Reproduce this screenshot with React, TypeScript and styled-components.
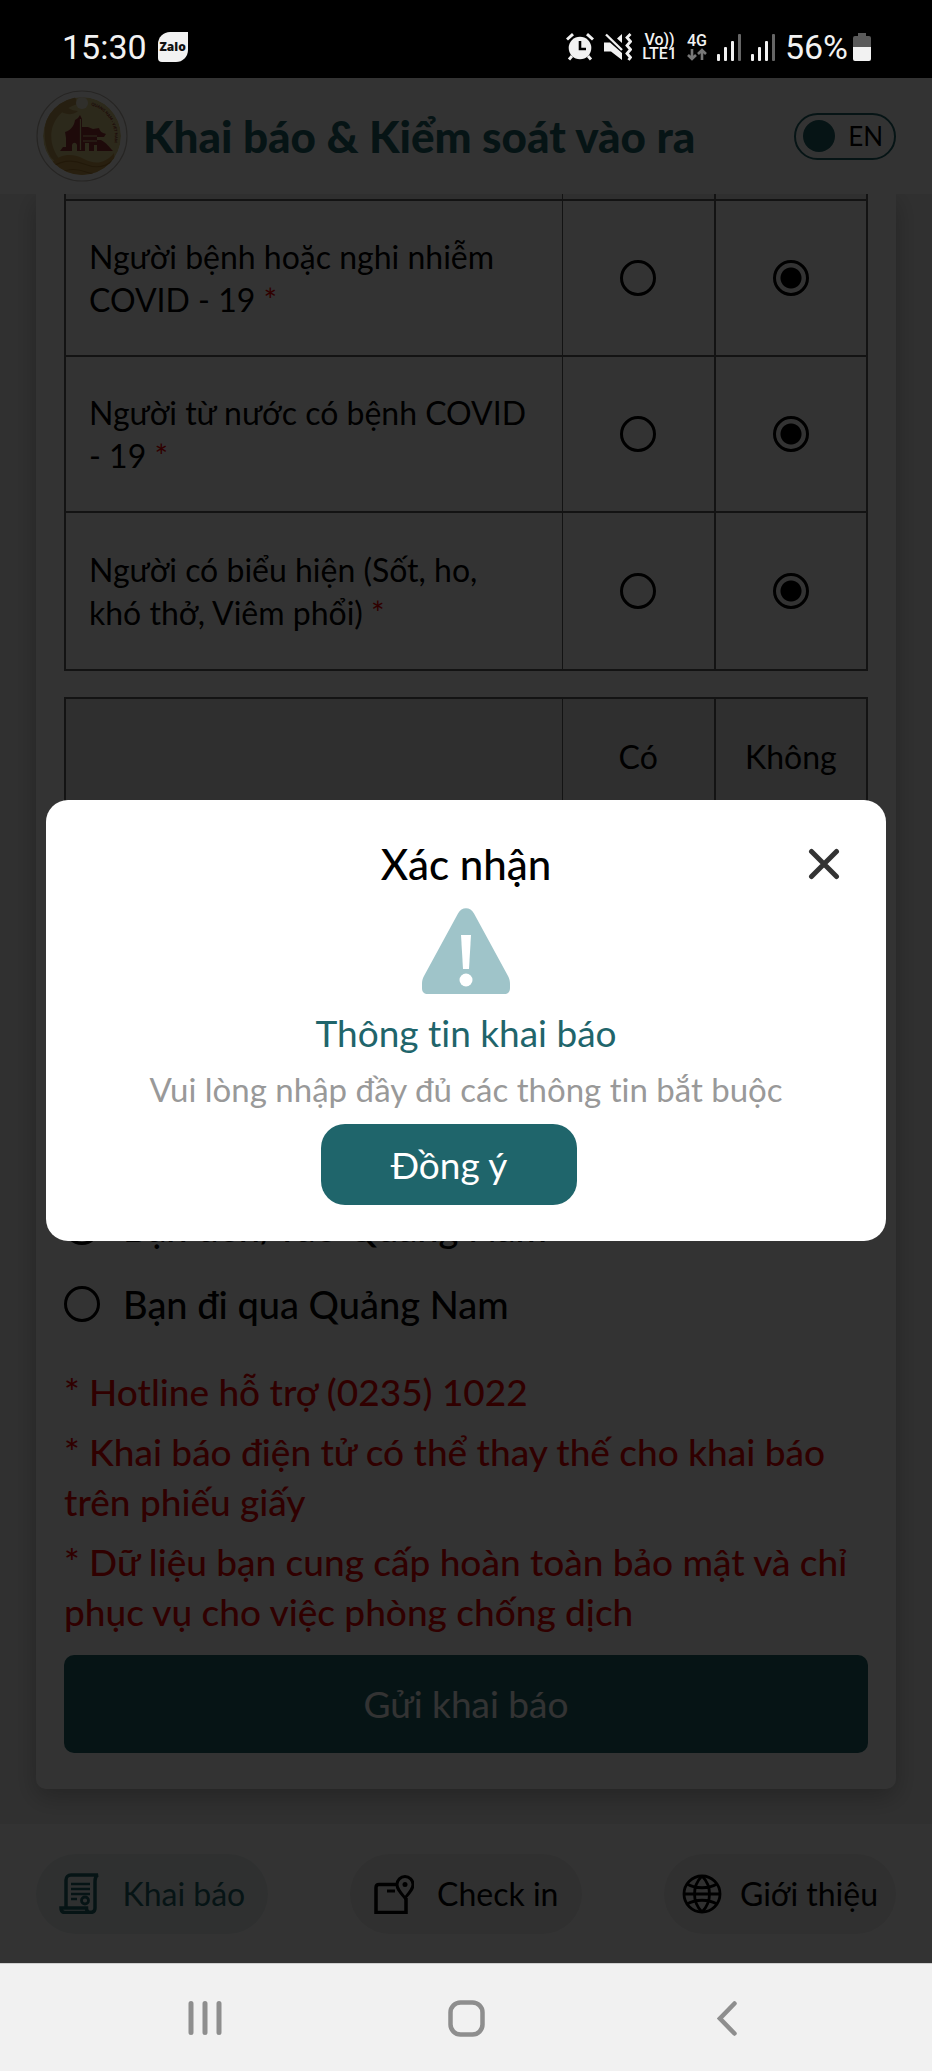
import React from 'react';
import styled, { createGlobalStyle, css } from 'styled-components';

const TEAL = '#1f656b';
const LINE = '#606060';

const GlobalStyle = createGlobalStyle`
  * { box-sizing: border-box; }
  body {
    margin: 0;
    background: #ffffff;
    color: #000000;
    font-family: Lato, "Open Sans", sans-serif;
    font-variant-ligatures: none;
  }
  button, input { font: inherit; color: inherit; margin: 0; }
`;

const Phone = styled.div`
  min-height: 100vh;
  display: flex;
  flex-direction: column;
`;

/* ---------- status bar ---------- */

const StatusBar = styled.div`
  height: 78px;
  padding: 16px 61px 0 62px;
  display: flex;
  align-items: center;
  justify-content: space-between;
  background: #000000;
  color: #f2f2f2;
  font-family: Roboto, sans-serif;
  font-size: 34px;
  line-height: 40px;
`;

const StatusGroup = styled.div<{ $gap: number }>`
  display: flex;
  align-items: center;
  gap: ${(p) => p.$gap}px;
`;

const ZaloBadge = styled.span`
  width: 30px;
  height: 30px;
  display: flex;
  align-items: center;
  justify-content: center;
  background: #f2f2f2;
  border-radius: 12px 0 12px 4px;
  color: #111111;
  font-family: "Open Sans", sans-serif;
  font-size: 12px;
  font-weight: 800;
  line-height: 12px;
`;

const Stack = styled.span`
  display: flex;
  flex-direction: column;
  align-items: center;
  font-size: 16px;
  font-weight: 500;
  line-height: 14px;
`;

/* ---------- web page ---------- */

const Screen = styled.div`
  position: relative;
  flex: 1;
  display: flex;
  flex-direction: column;
  background: #f0f0f0;
`;

const Header = styled.header`
  height: 116px;
  padding: 0 36px;
  display: flex;
  align-items: center;
  background: #ffffff;
`;

const AppTitle = styled.h1`
  flex: 1;
  margin: 0 0 0 15px;
  color: ${TEAL};
  font-size: 44px;
  font-weight: 900;
  line-height: 54px;
`;

const LanguageSwitch = styled.button`
  width: 102px;
  height: 47px;
  padding: 0 11px 0 7px;
  display: flex;
  align-items: center;
  justify-content: space-between;
  border: 2px solid ${TEAL};
  border-radius: 24px;
  background: transparent;
  font-size: 26px;
  line-height: 32px;
`;

const Knob = styled.span`
  width: 32px;
  height: 32px;
  border-radius: 50%;
  background: ${TEAL};
`;

const Main = styled.main`
  flex: 1;
  padding: 0 36px 35px;
  overflow: hidden;
`;

const Card = styled.form`
  padding: 0 28px 36px;
  border-radius: 0 0 10px 10px;
  background: #ffffff;
  box-shadow: 0 8px 24px rgba(0, 0, 0, 0.25);
`;

const Survey = styled.table<{ $openTop?: boolean }>`
  width: 100%;
  margin-bottom: 26px;
  border-collapse: collapse;
  border: 2px solid ${LINE};
  border-top-width: ${(p) => (p.$openTop ? 0 : 2)}px;
  font-size: 32px;
  line-height: 43px;
`;

const Row = styled.tr<{ $height: number; $shaded?: boolean }>`
  height: ${(p) => p.$height}px;
  background: ${(p) => (p.$shaded ? '#e8e8e8' : 'transparent')};
`;

const cell = css`
  padding: 0 32px 0 23px;
  border-top: 2px solid ${LINE};
  border-bottom: 2px solid ${LINE};
  font-weight: 400;
`;

const Question = styled.th`
  ${cell};
  text-align: left;
`;

const Answer = styled.td<{ $line: number }>`
  ${cell};
  width: 19%;
  padding: 0;
  border-left: ${(p) => p.$line}px solid ${LINE};
  text-align: center;
`;

const AnswerHead = styled(Answer).attrs({ as: 'th', scope: 'col' })``;

const ClippedRow = styled.tr`
  height: 6px;
  background: #e8e8e8;
`;

const ClippedCell = styled.td<{ $line: number }>`
  padding: 0;
  border-left: ${(p) => p.$line}px solid ${LINE};
`;

const Radio = styled.input.attrs({ type: 'radio' })`
  appearance: none;
  flex: none;
  display: block;
  width: 36px;
  height: 36px;
  border: 3px solid #000000;
  border-radius: 50%;
  background: transparent;
  &:checked {
    background: radial-gradient(circle, #000000 10px, transparent 11px);
  }
`;

const CellRadio = styled(Radio)`
  margin: 0 auto;
`;

const Required = styled.span`
  color: #f00000;
`;

const BlankRow = styled.tr`
  height: 312px;
`;

const Options = styled.fieldset`
  margin: 61px 0 25px;
  padding: 0;
  border: 0;
`;

const Option = styled.label`
  height: 77px;
  display: flex;
  align-items: center;
  gap: 23px;
  font-size: 38px;
  font-weight: 500;
  line-height: 50px;
`;

const Notes = styled.div`
  display: flex;
  flex-direction: column;
  gap: 10px;
  margin-bottom: 18px;
  color: #f00000;
  font-size: 37px;
  font-weight: 500;
  line-height: 50px;
`;

const Note = styled.p`
  margin: 0;
`;

const Submit = styled.button`
  width: 100%;
  height: 98px;
  border: 0;
  border-radius: 10px;
  background: ${TEAL};
  color: #ffffff;
  font-size: 37px;
  line-height: 50px;
`;

const TabBar = styled.nav`
  height: 139px;
  padding: 0 36px;
  display: flex;
  align-items: center;
  justify-content: space-between;
  background: #ffffff;
`;

const Tab = styled.a<{ $active?: boolean }>`
  width: 232px;
  height: 80px;
  display: flex;
  align-items: center;
  justify-content: space-evenly;
  border-radius: 40px;
  background: ${(p) => (p.$active ? '#e9f1f1' : '#efefef')};
  color: ${(p) => (p.$active ? TEAL : '#000000')};
  font-size: 32px;
  line-height: 44px;
  text-decoration: none;
`;

/* ---------- confirmation dialog ---------- */

const Overlay = styled.div`
  position: absolute;
  inset: 0;
  padding: 0 46px;
  display: flex;
  align-items: center;
  justify-content: center;
  background: rgba(0, 0, 0, 0.8);
`;

const Dialog = styled.section`
  position: relative;
  width: 100%;
  padding: 36px 40px;
  display: flex;
  flex-direction: column;
  align-items: center;
  border-radius: 22px;
  background: #ffffff;
  text-align: center;
`;

const DialogTitle = styled.h2`
  margin: 0 0 16px;
  font-size: 42px;
  font-weight: 500;
  line-height: 56px;
`;

const Close = styled.button`
  position: absolute;
  top: 42px;
  right: 40px;
  width: 44px;
  height: 44px;
  padding: 0;
  display: flex;
  align-items: center;
  justify-content: center;
  border: 0;
  background: transparent;
`;

const DialogHeading = styled.h3`
  margin: 14px 0 9px;
  color: ${TEAL};
  font-size: 37px;
  font-weight: 400;
  line-height: 50px;
`;

const DialogText = styled.p`
  margin: 0 0 13px;
  color: #999999;
  font-size: 33px;
  line-height: 44px;
`;

const Confirm = styled.button`
  width: 256px;
  height: 81px;
  margin-right: 34px;
  border: 0;
  border-radius: 24px;
  background: ${TEAL};
  color: #ffffff;
  font-size: 37px;
  line-height: 50px;
`;

/* ---------- system navigation ---------- */

const SystemBar = styled.div`
  height: 109px;
  padding: 0 8%;
  display: grid;
  grid-template-columns: repeat(3, 1fr);
  border-top: 1px solid #cfcfcf;
  background: #f1f1f1;
`;

const SystemButton = styled.button`
  padding: 0;
  display: flex;
  align-items: center;
  justify-content: center;
  border: 0;
  background: transparent;
`;

/* ---------- drawings ---------- */

const Alarm = () => (
  <svg width="28" height="28" viewBox="0 0 28 28" aria-hidden="true">
    <g stroke="#f2f2f2" strokeWidth="3" strokeLinecap="butt" fill="none">
      <path d="M1 6.5 7 1.2M27 6.5 21 1.2M6 23 3 26.4M22 23l3 3.4" />
    </g>
    <circle cx="14" cy="15" r="11.3" fill="#f2f2f2" />
    <path d="M14 8v8h6" fill="none" stroke="#000" strokeWidth="2.6" />
  </svg>
);

const Muted = () => (
  <svg width="28" height="28" viewBox="0 0 28 28" aria-hidden="true">
    <path d="M0 9.500h6L18 20v7L7 18.500H0z M13 5.500 18 1v9z" fill="#f2f2f2" />
    <path d="M2 1.500 18 17" stroke="#f2f2f2" strokeWidth="2.4" />
    <path d="M26.500 1 23 4.500l3.500 4-3.500 4 3.500 4-3.500 4 3.500 4-2 2.500" fill="none" stroke="#f2f2f2" strokeWidth="2.8" />
  </svg>
);

const DataArrows = () => (
  <svg width="20" height="13" viewBox="0 0 20 13" aria-hidden="true">
    <g fill="none" stroke="#777" strokeWidth="2.6">
      <path d="M5 1v10M1 7l4 4 4-4M15 12V2M11 6l4-4 4 4" />
    </g>
  </svg>
);

const Signal = () => (
  <svg width="24" height="27" viewBox="0 0 24 27" aria-hidden="true">
    <g fill="#f2f2f2">
      <rect x="0" y="20" width="3" height="7" rx="1" />
      <rect x="7" y="13" width="3" height="14" rx="1" />
      <rect x="14" y="7" width="3" height="20" rx="1" />
    </g>
    <rect x="21" y="0" width="3" height="27" rx="1" fill="#666" />
  </svg>
);

const Battery = () => (
  <svg width="18" height="28" viewBox="0 0 18 28" aria-hidden="true">
    <path d="M5 0h8v3h3a2 2 0 0 1 2 2v9H0V5a2 2 0 0 1 2-2h3z" fill="#5a5a5a" />
    <path d="M0 14h18v12a2 2 0 0 1-2 2H2a2 2 0 0 1-2-2z" fill="#f2f2f2" />
  </svg>
);

const Emblem = () => (
  <svg width="92" height="92" viewBox="0 0 92 92" aria-hidden="true">
    <defs>
      <path id="emblem-arc" d="M55 15A33 33 0 0 1 71 68" />
      <clipPath id="emblem-disc">
        <circle cx="46" cy="46" r="39" />
      </clipPath>
    </defs>
    <circle cx="46" cy="46" r="45" fill="#fff" stroke="#bdb7b0" strokeWidth="1.2" />
    <g clipPath="url(#emblem-disc)">
      <circle cx="46" cy="46" r="39" fill="#dccb86" />
      <path d="M38 5C10 10 2 44 14 66c3 5 7 6 10 4C8 50 14 22 42 14z" fill="#bd9c55" />
      <path d="M22 19c6 6 14 7 20 2-5 0-10-3-14-6z" fill="#bd9c55" />
      <path d="M14 74c12-12 24-10 34-5s20 6 30-6l2 26H10z" fill="#c59c4e" />
      <path d="M16 77c12-8 22-7 32-3s20 4 28-3M24 83c9-5 18-4 26-1s14 2 20-2" fill="none" stroke="#a8792e" strokeWidth="1.2" />
    </g>
    <circle cx="46" cy="13" r="6" fill="#efe9d8" />
    <path
      d="M24 61l3-4h3V48l-1-6c6-2 9-6 10-12l3-2 2-3 2 4v8h8l-2 0 5 2 6-1c1 4 4 5 7 6l-2 3h-7v3h4c6 3 8 7 12 11H61v-6h-3v6h-5v-8h-4v8h-8v-6c-1-3-4-3-5 0v6z"
      fill="#963636"
    />
    <path d="M44.500 29v31M47 46h14M47 51h14" stroke="#dccb86" strokeWidth="1.2" />
    <text fill="#8c2b2b" fontSize="4" fontWeight="900" fontFamily="Lato, sans-serif">
      <textPath href="#emblem-arc">QUANG NAM - VIET NAM</textPath>
    </text>
  </svg>
);

const Warning = () => (
  <svg width="88" height="86" viewBox="0 0 88 86" aria-hidden="true">
    <path
      d="M36 5.500C39.500-1.500 48.500-1.500 52 5.500L86 68c1.500 3 2 5 2 8v4c0 4-2 6-6 6H6c-4 0-6-2-6-6v-4c0-3 .500-5 2-8z"
      fill="#9fc4c9"
    />
    <path d="M39 27h10l-2 34h-6z" fill="#fff" />
    <circle cx="44" cy="72" r="6.5" fill="#fff" />
  </svg>
);

const Scroll = () => (
  <svg width="41" height="41" viewBox="0 0 41 41" fill="none" stroke="currentColor" strokeWidth="3.5" aria-hidden="true">
    <path d="M7 34V7c0-3 2-5 5-5h27c-3 1-3 4-3 7v26c0 3-2 4.500-5 4.500" />
    <path d="M2 35h25.500c0 3 1 4.500 4 4.500H6c-3 0-4-1.500-4-4.500z" />
    <path d="M12 11h19M12 16h19M12 21h19M12 26h6" strokeWidth="2.5" />
    <circle cx="26" cy="27.5" r="3.5" strokeWidth="2.8" />
  </svg>
);

const CheckInIcon = () => (
  <svg width="40" height="40" viewBox="0 0 40 40" fill="none" stroke="currentColor" strokeWidth="3.5" aria-hidden="true">
    <path d="M22 10.500H5c-2 0-3 1-3 3v25h30V24" />
    <path d="M13 17h8" strokeWidth="3" />
    <path d="M31 24c-5-6-8-9-8-13.500a8 8 0 0 1 16 0C39 15 36 18 31 24z" strokeWidth="3" />
    <circle cx="31" cy="10.5" r="2.5" fill="currentColor" stroke="none" />
  </svg>
);

const Globe = () => (
  <svg width="40" height="40" viewBox="0 0 40 40" fill="none" stroke="currentColor" strokeWidth="2.8" aria-hidden="true">
    <circle cx="20" cy="20" r="18" />
    <path d="M20 2c-10 10-10 26 0 36M20 2c10 10 10 26 0 36M2 20h36M5 10c9 5 21 5 30 0M5 30c9-5 21-5 30 0" />
  </svg>
);

/* ---------- content ---------- */

const QUESTIONS = [
  { text: 'Người bệnh hoặc nghi nhiễm COVID - 19', height: 156 },
  { text: 'Người từ nước có bệnh COVID - 19', height: 156 },
  { text: 'Người có biểu hiện (Sốt, ho, khó thở, Viêm phổi)', height: 158 },
];

const NOTES = [
  '* Hotline hỗ trợ (0235) 1022',
  '* Khai báo điện tử có thể thay thế cho khai báo trên phiếu giấy',
  '* Dữ liệu bạn cung cấp hoàn toàn bảo mật và chỉ phục vụ cho việc phòng chống dịch',
];

export default function App() {
  return (
    <Phone>
      <GlobalStyle />
      <StatusBar>
        <StatusGroup $gap={11}>
          <span>15:30</span>
          <ZaloBadge>Zalo</ZaloBadge>
        </StatusGroup>
        <StatusGroup $gap={10}>
          <Alarm />
          <Muted />
          <Stack>
            <span>Vo))</span>
            <span>LTE1</span>
          </Stack>
          <Stack>
            <span>4G</span>
            <DataArrows />
          </Stack>
          <Signal />
          <Signal />
          <StatusGroup $gap={5}>
            <span>56%</span>
            <Battery />
          </StatusGroup>
        </StatusGroup>
      </StatusBar>

      <Screen>
        <Header>
          <Emblem />
          <AppTitle>Khai báo &amp; Kiểm soát vào ra</AppTitle>
          <LanguageSwitch type="button" role="switch" aria-checked="false">
            <Knob />
            EN
          </LanguageSwitch>
        </Header>

        <Main>
          <Card>
            <Survey $openTop>
              <tbody>
                <ClippedRow>
                  <ClippedCell $line={2} />
                  <ClippedCell $line={1} />
                  <ClippedCell $line={2} />
                </ClippedRow>
                {QUESTIONS.map(({ text, height }, i) => (
                  <Row key={text} $height={height}>
                    <Question scope="row">
                      {text} <Required>*</Required>
                    </Question>
                    <Answer $line={1}>
                      <CellRadio name={`question-${i}`} aria-label={`${text}: Có`} />
                    </Answer>
                    <Answer $line={2}>
                      <CellRadio name={`question-${i}`} aria-label={`${text}: Không`} defaultChecked />
                    </Answer>
                  </Row>
                ))}
              </tbody>
            </Survey>

            <Survey>
              <thead>
                <Row $height={116} $shaded>
                  <Question as="td" />
                  <AnswerHead $line={1}>Có</AnswerHead>
                  <AnswerHead $line={2}>Không</AnswerHead>
                </Row>
              </thead>
              <tbody>
                <BlankRow>
                  <Question as="td" />
                  <Answer $line={1} />
                  <Answer $line={2} />
                </BlankRow>
              </tbody>
            </Survey>

            <Options>
              <Option>
                <Radio name="route" />
                Bạn đến/vào Quảng Nam
              </Option>
              <Option>
                <Radio name="route" />
                Bạn đi qua Quảng Nam
              </Option>
            </Options>

            <Notes>
              {NOTES.map((note) => (
                <Note key={note}>{note}</Note>
              ))}
            </Notes>

            <Submit type="button">Gửi khai báo</Submit>
          </Card>
        </Main>

        <TabBar>
          <Tab href="#khai-bao" $active>
            <Scroll />
            Khai báo
          </Tab>
          <Tab href="#check-in">
            <CheckInIcon />
            Check in
          </Tab>
          <Tab href="#gioi-thieu">
            <Globe />
            Giới thiệu
          </Tab>
        </TabBar>

        <Overlay>
          <Dialog role="dialog" aria-modal="true" aria-labelledby="dialog-title">
            <DialogTitle id="dialog-title">Xác nhận</DialogTitle>
            <Close type="button" aria-label="Đóng">
              <svg width="32" height="32" viewBox="0 0 32 32" aria-hidden="true">
                <path d="M3.500 3.500l25 25M28.500 3.500l-25 25" stroke="#333" strokeWidth="5" strokeLinecap="round" />
              </svg>
            </Close>
            <Warning />
            <DialogHeading>Thông tin khai báo</DialogHeading>
            <DialogText>Vui lòng nhập đầy đủ các thông tin bắt buộc</DialogText>
            <Confirm type="button">Đồng ý</Confirm>
          </Dialog>
        </Overlay>
      </Screen>

      <SystemBar>
        <SystemButton type="button" aria-label="Recents">
          <svg width="34" height="36" viewBox="0 0 34 36" stroke="#8e8e8e" strokeWidth="5" strokeLinecap="round" aria-hidden="true">
            <path d="M3 3.500v29M17 3.500v29M31 3.500v29" />
          </svg>
        </SystemButton>
        <SystemButton type="button" aria-label="Home">
          <svg width="37" height="37" viewBox="0 0 37 37" aria-hidden="true">
            <rect x="2.5" y="2.5" width="32" height="32" rx="10" fill="none" stroke="#8e8e8e" strokeWidth="4.5" />
          </svg>
        </SystemButton>
        <SystemButton type="button" aria-label="Back">
          <svg width="20" height="35" viewBox="0 0 20 35" aria-hidden="true">
            <path d="M17.500 2.500 3 17.500l14.500 15" fill="none" stroke="#8e8e8e" strokeWidth="4.5" strokeLinecap="round" />
          </svg>
        </SystemButton>
      </SystemBar>
    </Phone>
  );
}
